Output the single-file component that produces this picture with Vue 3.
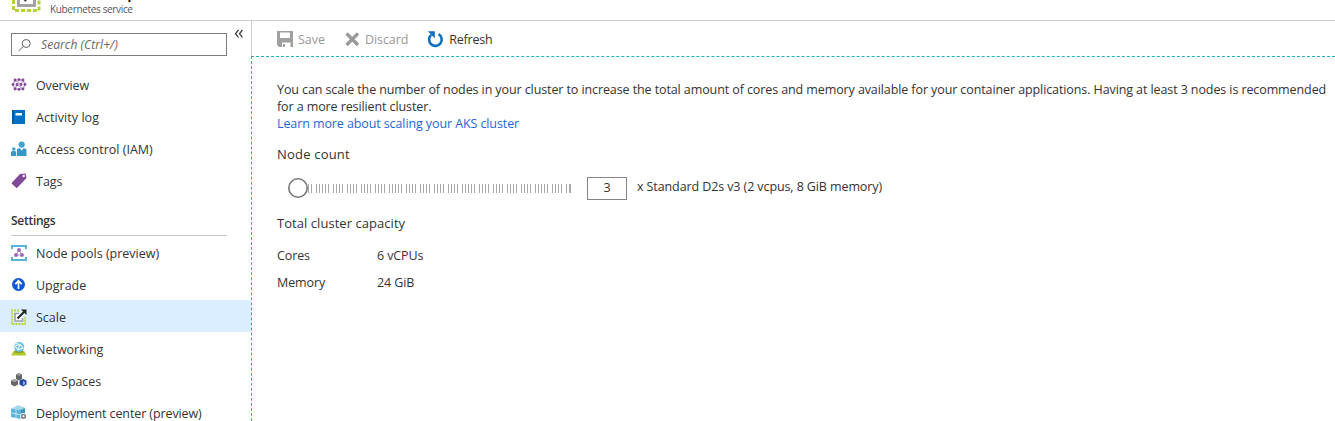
<script setup>
const general = [
  { id: 'overview', label: 'Overview' },
  { id: 'activity', label: 'Activity log' },
  { id: 'iam', label: 'Access control (IAM)' },
  { id: 'tags', label: 'Tags' },
]
const settings = [
  { id: 'pools', label: 'Node pools (preview)' },
  { id: 'upgrade', label: 'Upgrade' },
  { id: 'scale', label: 'Scale', active: true },
  { id: 'networking', label: 'Networking' },
  { id: 'dev', label: 'Dev Spaces' },
  { id: 'deploy', label: 'Deployment center (preview)' },
]
const sections = [
  { items: general },
  { title: 'Settings', items: settings },
]
// Slider tick marks: groups of lines 3px apart, 5px between groups
const groups = [2, 5, 4, 4, 4, 4, 5, 4, 4, 4, 4, 5, 4, 4, 4, 4, 5, 4, 2]
const ticks = []
let x = 0
for (const n of groups) {
  for (let i = 0; i < n; i++) ticks.push(x + i * 3)
  x += (n - 1) * 3 + 5
}
const dots = [[4, 3], [8, 2.6], [12, 3], [2, 7.5], [6, 7.5], [10, 7.5], [14, 7.5], [4, 12], [8, 12.4], [12, 12]]
</script>

<template>
  <div class="portal">
    <header class="top">
      <svg class="logo" width="30" height="14" viewBox="0 0 30 14">
        <path d="M2.500 0V10.500H28V0" fill="none" stroke="#b4d336" stroke-width="3" stroke-dasharray="4 2" />
        <path d="M7.500 0V5.500H23.500V0" fill="none" stroke="#a3a3a6" stroke-width="3" />
        <path d="M13 0h3l-2 2z" fill="#333" />
      </svg>
      <div class="title">p</div>
      <div class="kind">Kubernetes service</div>
    </header>
    <div class="body">
      <aside class="side">
        <div class="searchrow">
          <div class="search">
            <svg width="16" height="16" viewBox="0 0 16 16" fill="none" stroke="#666" stroke-width="1">
              <circle cx="9.200" cy="6.500" r="4" /><path d="M6.300 9.500L1.500 14" />
            </svg>
            <span>Search (Ctrl+/)</span>
          </div>
          <svg class="collapse" width="10" height="10" viewBox="0 0 10 10" fill="none" stroke="#333" stroke-width="1.200">
            <path d="M4.500 1L1.500 4.700L4.500 8.500M8.500 1L5.500 4.700L8.500 8.500" />
          </svg>
        </div>
        <nav v-for="(s, k) in sections" :key="k">
          <h2 v-if="s.title">{{ s.title }}</h2>
          <div v-for="it in s.items" :key="it.id" class="item" :class="{ active: it.active }">
            <svg width="16" height="16" viewBox="0 0 16 16">
              <g v-if="it.id === 'overview'">
                <path d="M4 3H12L14 7.500L12 12H4L2 7.500ZM4 3L10 7.500L12 3M4 12L6 7.500L12 12" fill="none" stroke="#c9a6dc" stroke-width="1.400" />
                <circle v-for="(d, i) in dots" :key="i" :cx="d[0]" :cy="d[1]" r="1.400" fill="#804998" />
              </g>
              <g v-else-if="it.id === 'activity'">
                <path d="M1 1H14V15H1Z" fill="#0072c6" /><path d="M1 1H3V15H1Z" fill="#005a9e" />
                <path d="M4.500 4H11V6.500H4.500Z" fill="#fff" />
              </g>
              <g v-else-if="it.id === 'iam'">
                <path d="M6 15V8.500L8 7H13L15.500 8.500V15Z" fill="#3999c6" /><circle cx="10.700" cy="3.600" r="3.100" fill="#3fa3cf" />
                <path d="M8.500 7L10.700 9.600L13 7Z" fill="#fff" />
                <path d="M0 15V11L1.200 10H4L5.200 11V15Z" fill="#3999c6" /><circle cx="2.800" cy="8" r="1.800" fill="#3fa3cf" />
              </g>
              <g v-else-if="it.id === 'tags'">
                <path d="M1 9.500L9 1L14.500 .500L15.500 5L6.500 14.500Q5.500 15.500 4.500 14L1 11Q.200 10.300 1 9.500Z" fill="#804998" />
                <circle cx="12.700" cy="3" r="1.200" fill="#fff" />
              </g>
              <g v-else-if="it.id === 'pools'">
                <path d="M1 4V1H15V4M1 12V15H15V12" fill="none" stroke="#59b4d9" stroke-width="2" />
                <path d="M8 5L5 10H11L8 5" fill="none" stroke="#c09ad1" />
                <circle cx="8" cy="5" r="1.900" fill="#9b62b3" /><circle cx="5" cy="10" r="1.900" fill="#9b62b3" /><circle cx="11" cy="10" r="1.900" fill="#9b62b3" />
              </g>
              <g v-else-if="it.id === 'upgrade'">
                <circle cx="7.500" cy="7.500" r="6.500" fill="#1058d0" />
                <path d="M7.500 12V4M4.300 7.100L7.500 3.800L10.700 7.100" fill="none" stroke="#fff" stroke-width="1.700" />
              </g>
              <g v-else-if="it.id === 'scale'">
                <path d="M8 1.500H1V15H14V8" fill="none" stroke="#b4d336" stroke-width="1.800" stroke-dasharray="2 1" />
                <path d="M8 4.500H4V12H11.500V9" fill="#fff" stroke="#a0a1a2" stroke-width="1.700" />
                <path d="M6.500 9.500L13 3" stroke="#222" stroke-width="2" /><path d="M10 .500H15.500V6Z" fill="#222" />
              </g>
              <g v-else-if="it.id === 'networking'">
                <path d="M3 9.500H13L15.500 14.500H0Z" fill="#b3c92d" /><path d="M4.500 9.500H11.500L12.500 11.700H3.500Z" fill="#829b22" />
                <circle cx="8.200" cy="6" r="5" fill="#6abfe1" />
                <path d="M4 5L9 3.500L12 7L7 9L4 5M9 3.500L7 9M5 2.500L9 3.500" fill="none" stroke="#e8f7fc" stroke-width="1.100" />
              </g>
              <g v-else-if="it.id === 'dev'">
                <path d="M8 0L11 1.500V6L8 7.500L5 6V1.500Z" fill="#666" /><path d="M5 1.500L8 0L11 1.500L8 3Z" fill="#999" />
                <path d="M3.500 6L7 7.500V11.500L3.500 13.500L0 11.500V7.500Z" fill="#666" /><path d="M0 7.500L3.500 6L7 7.500L3.500 9Z" fill="#aaa" />
                <path d="M12 6L15.500 7.500V11.500L12 13.500L8.500 11.500V7.500Z" fill="#24479f" /><path d="M12 8L14 9V11.300L12 12.300Z" fill="#8eb0ee" />
              </g>
              <g v-else>
                <path d="M0 4L7 .500L14 3L10 5.500V14L0 12Z" fill="#59b4d9" /><path d="M0 4L7 .500L14 3L9 5Z" fill="#a6d9ed" />
                <path d="M5 4.700V13M0 8L9 9.500" stroke="#d8f0f8" stroke-width=".800" /><path d="M10 5L14 3V9L10 12Z" fill="#3c97bd" />
                <circle cx="12.500" cy="11.300" r="3.400" fill="#fff" /><circle cx="12.500" cy="11.300" r="1.800" fill="none" stroke="#808285" stroke-width="1.700" />
              </g>
            </svg>
            <span :class="'t-' + it.id">{{ it.label }}</span>
          </div>
        </nav>
      </aside>
      <main class="main">
        <div class="toolbar">
          <div class="cmd off">
            <svg width="17" height="17" viewBox="0 0 17 17">
              <path d="M0 0H16V16H13.500V11.500H5V16H2L0 14Z" fill="#a0a0a0" /><path d="M3 1.500H13V7H3Z" fill="#fff" /><path d="M6 13H8V16H6Z" fill="#a0a0a0" />
            </svg><span>Save</span>
          </div>
          <div class="cmd off discard">
            <svg width="15" height="15" viewBox="0 0 15 15"><path d="M1.500 1.500L13 13M13 1.500L1.500 13" stroke="#999" stroke-width="3.200" /></svg>
            <span>Discard</span>
          </div>
          <div class="cmd refresh">
            <svg width="17" height="17" viewBox="0 0 17 17">
              <path d="M11.500 3.100A6.300 6.300 0 1 1 4.200 3.900" fill="none" stroke="#0f6fc0" stroke-width="2.600" />
              <path d="M.800 .300H7.800V7.300L5.500 5L3.500 3Z" fill="#0f6fc0" />
            </svg><span>Refresh</span>
          </div>
        </div>
        <section class="content">
          <p><span class="t-p1">You can scale the number of nodes in your cluster to increase the total amount of cores and memory available for your container applications. Having at least 3 nodes is recommended</span><br><span class="tight">for a more resilient cluster.</span><br><a class="tight">Learn more about scaling your AKS cluster</a></p>
          <div class="label t-count">Node count</div>
          <div class="sliderrow">
            <svg class="slider" width="286" height="22" viewBox="0 0 286 22">
              <path v-for="t in ticks" :key="t" :d="`M${t + 20.5} 7V16`" stroke="#a8a8a8" />
              <path d="M282.500 7V16" stroke="#a8a8a8" />
              <circle cx="10" cy="11" r="9.200" fill="#fff" stroke="#777" stroke-width="1.600" />
            </svg>
            <div class="count">3</div>
            <span class="tight">x Standard D2s v3 (2 vcpus, 8 GiB memory)</span>
          </div>
          <div class="label total">Total cluster capacity</div>
          <dl>
            <dt>Cores</dt><dd>6 vCPUs</dd>
            <dt>Memory</dt><dd>24 GiB</dd>
          </dl>
        </section>
      </main>
    </div>
  </div>
</template>

<style>
html, body { overflow: hidden; }
</style>
<style scoped>
* { box-sizing: border-box; }
.portal { width: 1335px; height: 421px; overflow: hidden; background: #fff; color: #333; font: 12.5px/16px "Open Sans", "Noto Sans", sans-serif; display: flex; flex-direction: column; }
.portal span, .portal a, .portal .label, .portal dd, .portal dt { white-space: nowrap; }
.top { height: 21px; flex: none; position: relative; border-bottom: 1px solid #c8cdd2; overflow: hidden; }
.logo { position: absolute; left: 11px; top: 0; }
.title { position: absolute; left: 127px; top: -18px; font-size: 17px; line-height: 20px; color: #111; font-weight: 600; }
.kind { position: absolute; left: 50px; top: 1px; font-size: 10px; color: #555; letter-spacing: -.34px; }
.body { flex: 1; display: flex; min-height: 0; }
.side { width: 251px; flex: none; }
.searchrow { display: flex; height: 47px; padding: 12px 0 0 11px; }
.search { width: 216px; height: 23px; border: 1px solid #7d7d7d; display: flex; align-items: center; padding-left: 5px; color: #666; font-style: italic; font-size: 12px; }
.search span { margin-left: 8px; letter-spacing: .08px; }
.collapse { margin: -4px 0 0 7px; }
.item { height: 32px; display: flex; align-items: center; padding: 2px 0 0 11px; }
.item svg { flex: none; margin-right: 9px; }
.item span { padding-top: 2px; }
.item.active { background: #dbeeff; }
.t-deploy, .t-dev { letter-spacing: -.1px; }
.t-overview { letter-spacing: -.15px; }
.t-activity { letter-spacing: .06px; }
.tight { letter-spacing: -.1px; }
.t-p1 { letter-spacing: -.098px; }
.t-count { letter-spacing: .2px; }
h2 { margin: 0 0 0 11px; width: 216px; height: 40px; padding-top: 17px; border-bottom: 1px solid #c8c8c8; font-size: 12px; font-weight: 600; line-height: 16px; letter-spacing: -.28px; }
.main { flex: 1; min-width: 0; display: flex; flex-direction: column; }
.toolbar { height: 35px; border-left: 1px solid #c8cdd2; display: flex; padding: 2px 0 0 25px; }
.cmd { display: flex; align-items: center; height: 33px; }
.cmd svg { margin-right: 4px; }
.off { color: #999; }
.cmd.discard { margin-left: 20px; }
.cmd.discard span { letter-spacing: -.1px; }
.cmd.discard svg { margin-right: 5px; }
.cmd.refresh { margin-left: 19px; }
.cmd.refresh span { letter-spacing: -.2px; }
.cmd.refresh svg { margin-right: 5px; }
.content { flex: 1; border: 1px dashed #1fb0c4; border-width: 1px 0 0 1px; padding: 24px 0 0 25px; }
p { margin: 0; line-height: 17px; }
a { color: #1b69d6; }
.label { margin-top: 14px; font-size: 13px; }
.sliderrow { display: flex; height: 24px; align-items: center; margin: 14px 0 0 11px; }
.slider { margin-right: 13px; }
.count { width: 40px; height: 23px; border: 1px solid #858585; display: flex; align-items: center; justify-content: center; margin-right: 10px; }
.sliderrow span { padding-bottom: 3px; }
.total { margin-top: 15px; letter-spacing: .05px; }
dl { margin: 11px 0 0; display: grid; grid-template-columns: 100px 1fr; grid-auto-rows: 27px; align-items: center; }
dt, dd { letter-spacing: -.1px; }
dd { margin: 0; }
</style>
